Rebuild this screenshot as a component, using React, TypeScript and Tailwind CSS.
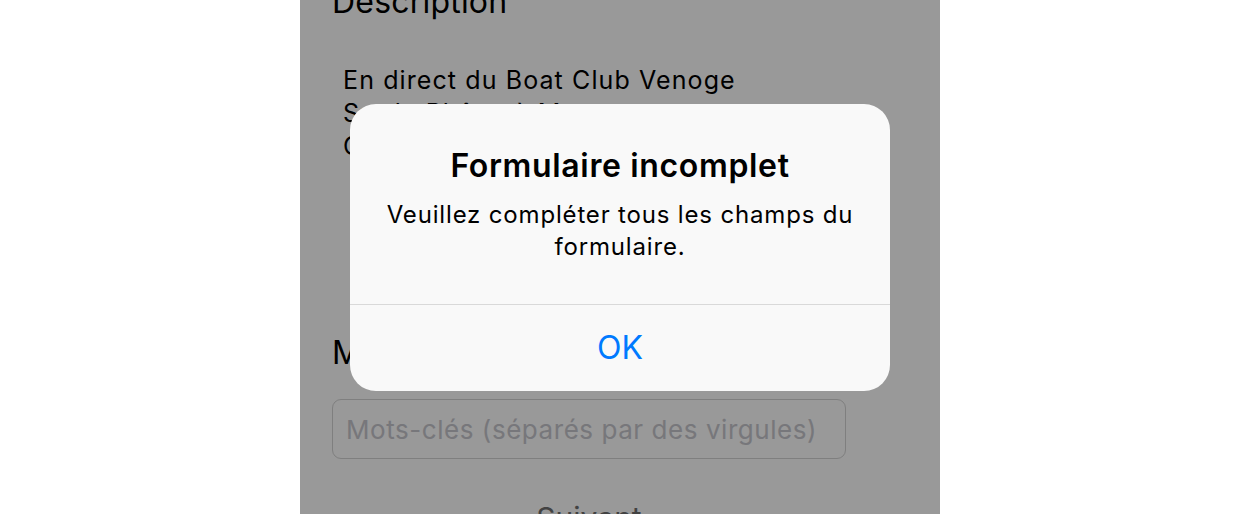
import React from "react";

export default function App() {
  const font = { fontFamily: "Inter, 'Noto Sans', 'Liberation Sans', sans-serif" };
  return (
    <div className="w-full h-[514px] bg-white flex justify-center overflow-hidden" style={font}>
      <div className="relative w-[640px] h-[514px] bg-white overflow-hidden">
        <div className="flex flex-col pl-[32px] pr-[94px] -mt-[17px]">
          <div className="text-[32px] leading-[38px] text-black tracking-[0.2px]">Description</div>
          <div className="mt-[43px] pl-[11px] h-[198px] text-[25px] leading-[33px] text-black tracking-[1.1px]">
            <div>En direct du Boat Club Venoge</div>
            <div>Sur le Rhône à Morges</div>
            <div>Course du dimanche</div>
          </div>
          <div className="mt-[72px] text-[32px] leading-[38px] text-black">Mots-clés</div>
          <div className="mt-[27px] h-[60px] rounded-[9px] border border-[#d4d4d4] flex items-center px-[13px]">
            <span className="text-[26px] text-[#c7c7cd] whitespace-nowrap tracking-[0.55px]">Mots-clés (séparés par des virgules)</span>
          </div>
          <div className="mt-[41px] text-center text-[30px] leading-[36px] text-[#6f6f6f]">Suivant</div>
        </div>
        <div className="absolute inset-0 bg-black/40" />
        <div className="absolute left-[50px] top-[104px] w-[540px] h-[287px] rounded-[26px] bg-[#f9f9f9] flex flex-col">
          <div className="flex flex-col items-center pt-[43px] px-[20px] h-[200px]">
            <div className="text-[32px] leading-[38px] font-semibold text-black tracking-[0.65px]">Formulaire incomplet</div>
            <div className="mt-[14px] text-[24px] leading-[32px] text-black text-center tracking-[0.83px]">
              Veuillez compléter tous les champs du formulaire.
            </div>
          </div>
          <div className="h-px bg-[#d9d9d9]" />
          <div className="flex-1 flex items-center justify-center text-[32px] leading-[38px] text-[#007aff]">OK</div>
        </div>
      </div>
    </div>
  );
}
